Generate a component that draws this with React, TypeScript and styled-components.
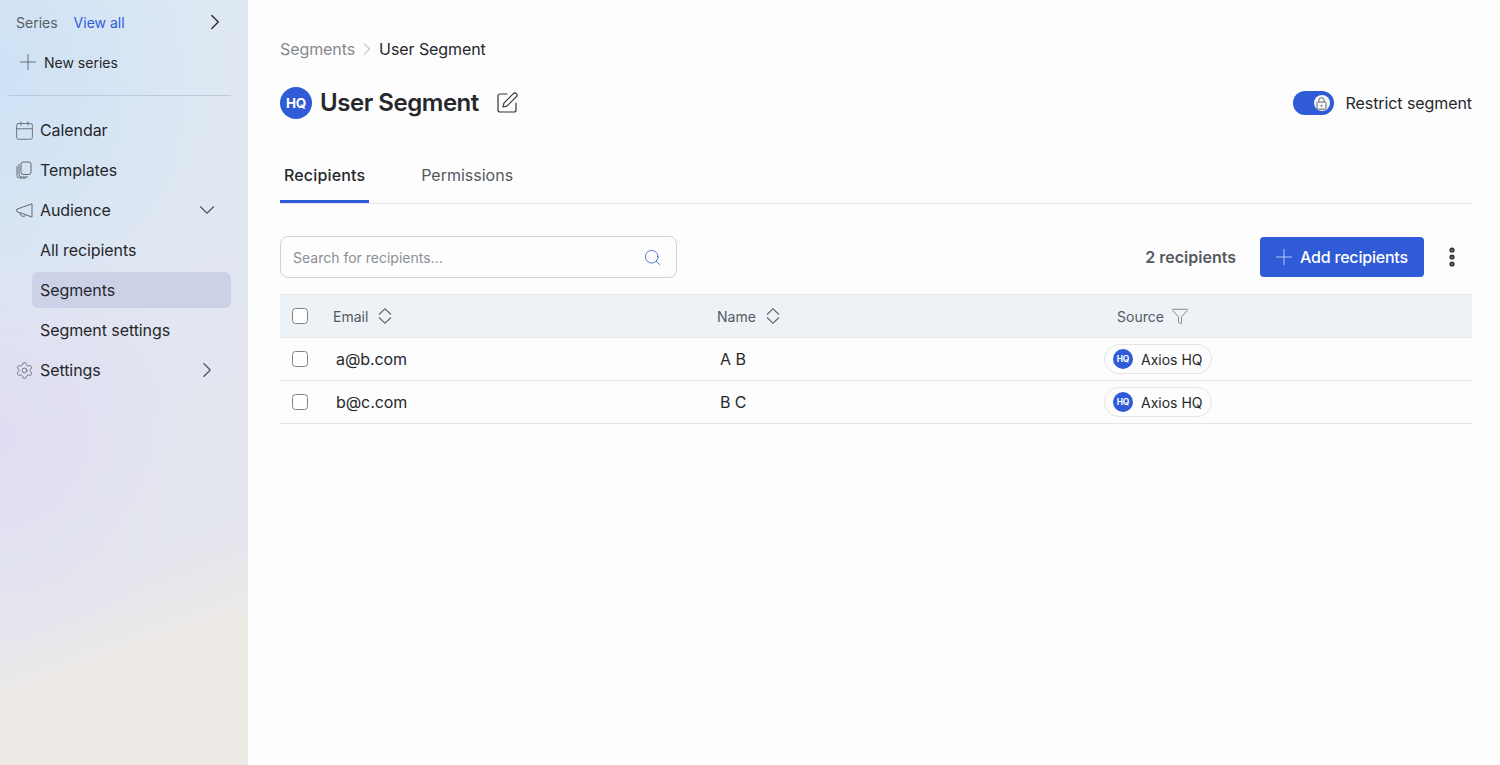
import React from 'react';
import styled, { createGlobalStyle } from 'styled-components';
import { ChevronRight, ChevronDown, Calendar, Settings, SquarePen, Search, Funnel, EllipsisVertical } from 'lucide-react';

const GlobalStyle = createGlobalStyle`
  html, body { margin: 0; padding: 0; height: 100%; }
  body { font-family: Inter, "Liberation Sans", sans-serif; color: #26282c; background: #fdfdfd; }
  * { box-sizing: border-box; }
`;

const Page = styled.div`
  display: flex;
  width: 100%;
  height: 765px;
  overflow: hidden;
`;

// Sidebar
const Sidebar = styled.aside`
  width: 248px;
  flex: none;
  padding: 2px 17px 0 8px;
  background:
    radial-gradient(ellipse 230px 270px at 0% 10%, #cee1f5 0%, rgba(206, 225, 245, 0) 100%),
    radial-gradient(ellipse 190px 220px at 0% 57%, #dfddf3 0%, rgba(223, 221, 243, 0) 100%),
    linear-gradient(160deg, #dee9f4 0%, #e0e8f2 30%, #e3e5f0 52%, #e6e7ed 75%, #eeeae5 84%, #eeeae5 100%);
`;

const SeriesRow = styled.div`
  display: flex;
  align-items: center;
  height: 40px;
  padding-left: 8px;
  font-size: 14px;
  color: #5a5e66;
`;

const ViewAll = styled.a`
  margin-left: 16px;
  color: #2f5bd6;
`;

const SeriesArrow = styled.span`
  display: flex;
  margin-left: auto;
  margin-right: 3px;
  color: #26282c;
`;

const NewSeries = styled.div`
  display: flex;
  align-items: center;
  gap: 8px;
  height: 40px;
  padding-left: 12px;
  font-size: 14px;
  color: #26282c;
  svg { color: #6b6f76; }
`;

const Divider = styled.hr`
  width: 223px;
  height: 1px;
  margin: 13px 0 14px;
  border: 0;
  background: #bcc8dc;
`;

const NavItem = styled.div`
  display: flex;
  align-items: center;
  gap: 7px;
  height: 40px;
  padding-left: 7px;
  font-size: 16px;
  letter-spacing: -0.08px;
  color: #26282c;
`;

const NavIcon = styled.span`
  display: flex;
  align-items: center;
  justify-content: center;
  flex: none;
  width: 18px;
  height: 22px;
  color: #64686f;
  svg { flex: none; }
`;

const NavArrow = styled.span`
  display: flex;
  margin-left: auto;
  margin-right: 11px;
  color: #4b4f55;
`;

const SubItem = styled.div<{ $active?: boolean }>`
  display: flex;
  align-items: center;
  width: 199px;
  height: ${p => (p.$active ? '36px' : '40px')};
  margin: ${p => (p.$active ? '2px' : '0')} 0 ${p => (p.$active ? '2px' : '0')} 24px;
  padding-left: 8px;
  border-radius: 6px;
  font-size: 16px;
  letter-spacing: -0.08px;
  color: #26282c;
  background: ${p => (p.$active ? '#cbd2e8' : 'transparent')};
`;

// Main
const Main = styled.main`
  flex: 1;
  min-width: 0;
  padding: 38px 28px 0 32px;
  background: #fdfdfd;
`;

const Breadcrumb = styled.nav`
  display: flex;
  align-items: center;
  height: 22px;
  font-size: 16px;
  letter-spacing: -0.08px;
  color: #26282c;
  svg { margin: 0 2px; color: #8b8f96; }
`;

const Crumb = styled.span`
  color: #85898f;
`;

const TitleRow = styled.div`
  display: flex;
  align-items: center;
  height: 40px;
  margin-top: 23px;
`;

const LogoBadge = styled.span<{ $size: number }>`
  display: flex;
  align-items: center;
  justify-content: center;
  flex: none;
  width: ${p => p.$size}px;
  height: ${p => p.$size}px;
  border-radius: 50%;
  background: #2f5bd6;
  color: #fff;
  font-weight: 700;
  font-size: ${p => p.$size * 0.42}px;
  letter-spacing: -0.2px;
`;

const Title = styled.h1`
  margin: 0 16px 0 8px;
  font-size: 24px;
  font-weight: 600;
  line-height: 32px;
  letter-spacing: -0.46px;
  color: #26282c;
`;

const EditButton = styled.span`
  display: flex;
  color: #33363b;
`;

const Restrict = styled.div`
  display: flex;
  align-items: center;
  gap: 12px;
  margin-left: auto;
  font-size: 16px;
  letter-spacing: -0.08px;
`;

const Toggle = styled.span`
  display: flex;
  align-items: center;
  justify-content: flex-end;
  width: 41px;
  height: 24px;
  padding-right: 4px;
  border-radius: 12px;
  background: #2f5bd6;
`;

const Knob = styled.span`
  display: flex;
  align-items: center;
  justify-content: center;
  width: 16px;
  height: 16px;
  border-radius: 50%;
  background: #f6f6f6;
  color: #63666c;
`;

const Tabs = styled.div`
  display: flex;
  gap: 48px;
  height: 61px;
  margin-top: 20px;
  border-bottom: 1px solid #e3e5e8;
`;

const Tab = styled.div<{ $active?: boolean }>`
  display: flex;
  align-items: center;
  height: 60px;
  padding: 7px 4px 0;
  margin-bottom: -1px;
  font-size: 16px;
  font-weight: ${p => (p.$active ? 500 : 400)};
  letter-spacing: ${p => (p.$active ? '0.15px' : '0')};
  color: ${p => (p.$active ? '#26282c' : '#55595f')};
  border-bottom: 3px solid ${p => (p.$active ? '#2f5bd6' : 'transparent')};
`;

const Toolbar = styled.div`
  display: flex;
  align-items: center;
  height: 42px;
  margin-top: 32px;
`;

const SearchBox = styled.div`
  display: flex;
  align-items: center;
  justify-content: space-between;
  width: 397px;
  height: 42px;
  padding: 0 14px 0 12px;
  border: 1px solid #d0d3d7;
  border-radius: 8px;
  font-size: 14px;
  color: #8b8f96;
  svg { color: #3f66c4; }
`;

const Count = styled.span`
  margin-left: auto;
  font-size: 16px;
  font-weight: 600;
  color: #55595f;
`;

const AddButton = styled.button`
  display: flex;
  align-items: center;
  gap: 8px;
  width: 164px;
  height: 40px;
  margin-left: 24px;
  padding: 0 0 0 16px;
  border: 0;
  border-radius: 4px;
  background: #2f5bd6;
  color: #fff;
  font-family: inherit;
  font-size: 16px;
  font-weight: 500;
  letter-spacing: -0.2px;
  svg { color: #b9c9f2; }
`;

const MoreButton = styled.span`
  display: flex;
  margin-left: 16px;
  margin-right: 8px;
  color: #33363b;
`;

const Table = styled.div`
  margin-top: 16px;
`;

const columns = 'grid-template-columns: 53px 384px 400px 1fr;';

const HeadRow = styled.div`
  display: grid;
  ${columns}
  align-items: center;
  height: 44px;
  border-top: 1px solid #e3e5e8;
  border-bottom: 1px solid #e3e5e8;
  background: #edf2f7;
  font-size: 14px;
  color: #55595f;
`;

const HeadCell = styled.div`
  display: flex;
  align-items: center;
  gap: 9px;
  svg { color: #63676e; }
`;

const SourceHead = styled(HeadCell)`
  gap: 7px;
`;

const Row = styled.div`
  display: grid;
  ${columns}
  align-items: center;
  height: 43px;
  border-bottom: 1px solid #e3e5e8;
  font-size: 16px;
  letter-spacing: -0.08px;
`;

const CheckCell = styled.div`
  display: flex;
  padding-left: 12px;
`;

const Check = styled.span`
  width: 16px;
  height: 16px;
  border: 1.5px solid #808389;
  border-radius: 3.5px;
  background: #fff;
`;

const Cell = styled.div`
  padding-left: 3px;
`;

const SourceCell = styled.div`
  margin-left: -13px;
`;

const Pill = styled.span`
  display: inline-flex;
  align-items: center;
  gap: 8px;
  height: 30px;
  padding: 0 8px;
  border: 1px solid #e3e5e8;
  border-radius: 15px;
  font-size: 14px;
  letter-spacing: 0;
`;

// Icons not in the package, drawn to match
const PlusIcon = () => (
  <svg width="16" height="16" viewBox="0 0 16 16" fill="none" stroke="currentColor" strokeWidth="1">
    <path d="M8 0v16M0 8h16" />
  </svg>
);

const SortIcon = () => (
  <svg width="16" height="16" viewBox="0 0 16 16" fill="none" stroke="currentColor" strokeWidth="1.1">
    <path d="M2 6.5 8 .8l6 5.7M2 9.5l6 5.7 6-5.7" />
  </svg>
);

const StackIcon = () => (
  <svg width="16" height="18" viewBox="0 0 16 18" fill="none" stroke="currentColor" strokeWidth="1">
    <rect x="5" y="1" width="10" height="12.5" rx="2.2" />
    <path d="M3 3v10.5A2.5 2.5 0 0 0 5.5 16H12" />
    <path d="M1 5v9.5A2.5 2.5 0 0 0 3.5 17H10" />
  </svg>
);

const MegaphoneIcon = () => (
  <svg width="17" height="15" viewBox="0 0 17 15" fill="none" stroke="currentColor" strokeWidth="1">
    <path d="M16 .8v13.2L.8 8.6V6.2z" />
    <path d="M4.2 9.8a3 3 0 0 0 5.6 2" />
  </svg>
);

const LockIcon = () => (
  <svg width="11" height="13" viewBox="0 0 11 13" fill="none" stroke="currentColor" strokeWidth="1">
    <rect x="1" y="5" width="9" height="7.2" rx="1.2" />
    <path d="M2.8 5V3.4a2.7 2.7 0 0 1 5.4 0V5" />
    <circle cx="5.5" cy="8.6" r="0.9" fill="currentColor" stroke="none" />
  </svg>
);

const rows = [
  { email: 'a@b.com', name: 'A B' },
  { email: 'b@c.com', name: 'B C' },
];

const App: React.FC = () => (
  <Page>
    <GlobalStyle />
    <Sidebar>
      <SeriesRow>
        Series
        <ViewAll>View all</ViewAll>
        <SeriesArrow><ChevronRight size={26} strokeWidth={1.2} /></SeriesArrow>
      </SeriesRow>
      <NewSeries><PlusIcon />New series</NewSeries>
      <Divider />
      <NavItem><NavIcon><Calendar size={21} strokeWidth={1} /></NavIcon>Calendar</NavItem>
      <NavItem><NavIcon><StackIcon /></NavIcon>Templates</NavItem>
      <NavItem>
        <NavIcon><MegaphoneIcon /></NavIcon>Audience
        <NavArrow><ChevronDown size={26} strokeWidth={1} /></NavArrow>
      </NavItem>
      <SubItem>All recipients</SubItem>
      <SubItem $active>Segments</SubItem>
      <SubItem>Segment settings</SubItem>
      <NavItem>
        <NavIcon><Settings size={19} strokeWidth={1.1} /></NavIcon>Settings
        <NavArrow><ChevronRight size={26} strokeWidth={1} /></NavArrow>
      </NavItem>
    </Sidebar>
    <Main>
      <Breadcrumb>
        <Crumb>Segments</Crumb>
        <ChevronRight size={20} strokeWidth={1} />
        User Segment
      </Breadcrumb>
      <TitleRow>
        <LogoBadge $size={32}>HQ</LogoBadge>
        <Title>User Segment</Title>
        <EditButton><SquarePen size={24} strokeWidth={1.2} /></EditButton>
        <Restrict>
          <Toggle><Knob><LockIcon /></Knob></Toggle>
          Restrict segment
        </Restrict>
      </TitleRow>
      <Tabs>
        <Tab $active>Recipients</Tab>
        <Tab>Permissions</Tab>
      </Tabs>
      <Toolbar>
        <SearchBox>
          Search for recipients...
          <Search size={19} strokeWidth={1.1} />
        </SearchBox>
        <Count>2 recipients</Count>
        <AddButton><PlusIcon />Add recipients</AddButton>
        <MoreButton><EllipsisVertical size={24} strokeWidth={3.2} /></MoreButton>
      </Toolbar>
      <Table>
        <HeadRow>
          <CheckCell><Check /></CheckCell>
          <HeadCell>Email <SortIcon /></HeadCell>
          <HeadCell>Name <SortIcon /></HeadCell>
          <SourceHead>Source <Funnel size={18} strokeWidth={1} /></SourceHead>
        </HeadRow>
        {rows.map(row => (
          <Row key={row.email}>
            <CheckCell><Check /></CheckCell>
            <Cell>{row.email}</Cell>
            <Cell>{row.name}</Cell>
            <SourceCell>
              <Pill><LogoBadge $size={20}>HQ</LogoBadge>Axios HQ</Pill>
            </SourceCell>
          </Row>
        ))}
      </Table>
    </Main>
  </Page>
);

export default App;
